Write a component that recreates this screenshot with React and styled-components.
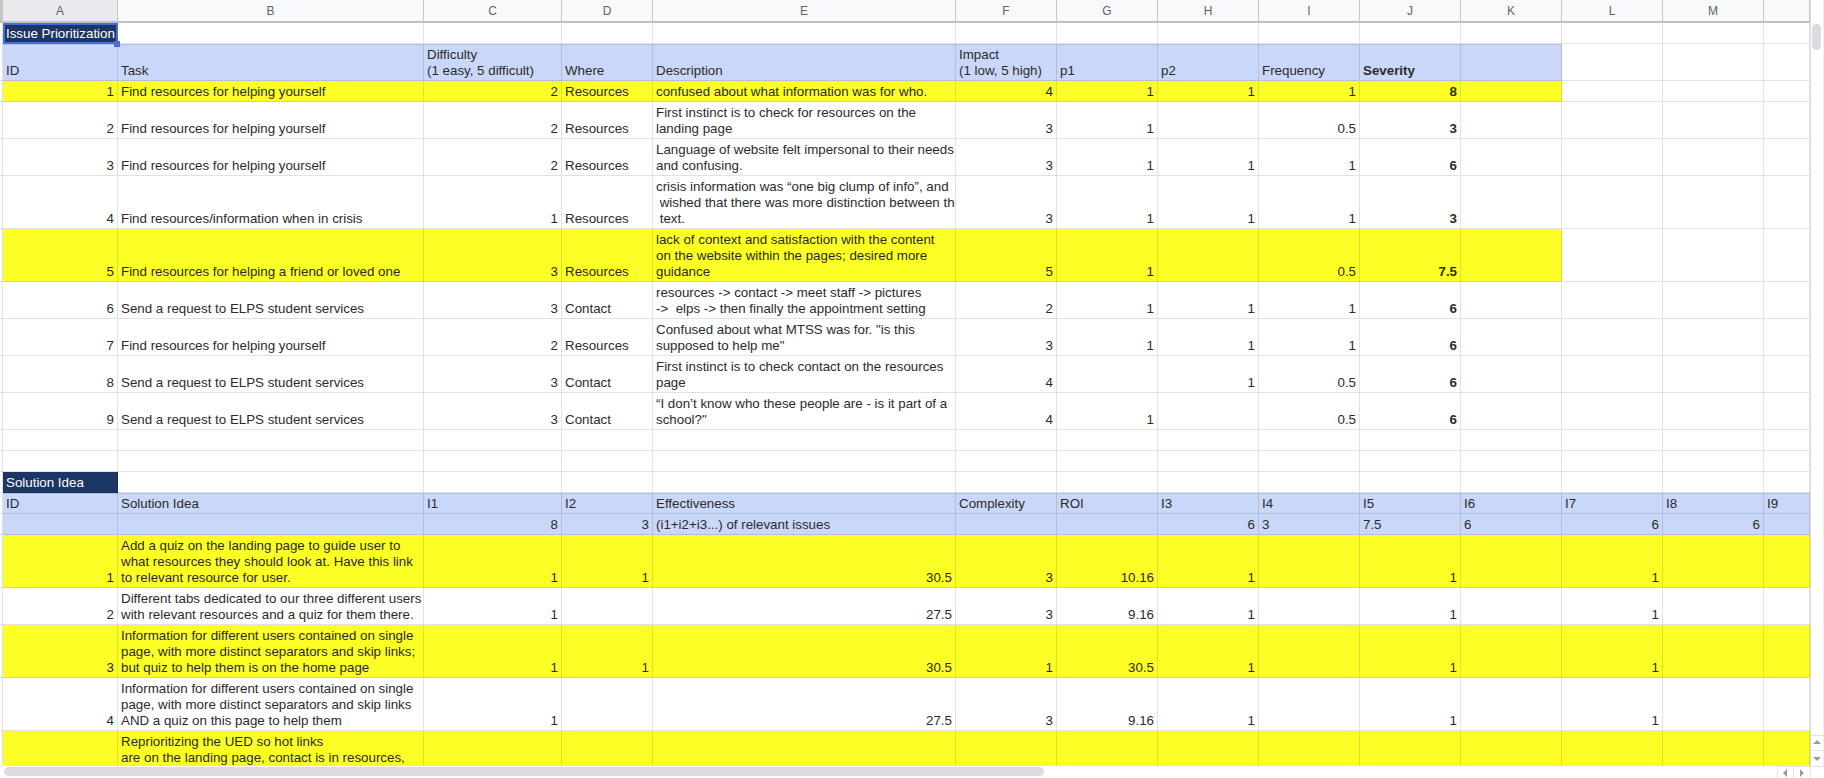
import React from 'react';
import styled, { createGlobalStyle, css } from 'styled-components';

const Global = createGlobalStyle`
  html, body { margin: 0; padding: 0; background: #fff; overflow: hidden; }
  #root { width: 1824px; height: 778px; }
`;

const COLS = '3px 115px 306px 138px 91px 303px 101px 101px 101px 101px 101px 101px 101px 101px 46px';

const Page = styled.div`
  display: flex;
  flex-direction: column;
  width: 1824px;
  height: 778px;
  overflow: hidden;
  font-family: "Liberation Sans", Arial, sans-serif;
  font-size: 13.33px;
  line-height: 16px;
  color: #2b2b2b;
`;
const Main = styled.div`
  display: flex;
  height: 766px;
`;
const Grid = styled.div`
  width: 1810px;
  height: 766px;
  overflow: hidden;
`;
const LetterBar = styled.div`
  display: grid;
  grid-template-columns: ${COLS};
  height: 23px;
  background: #f8f9fa;
`;
const Letter = styled.div`
  display: flex;
  align-items: center;
  justify-content: center;
  box-sizing: border-box;
  font-size: 12px;
  color: #5f6368;
  border-right: 1px solid #c7c7c7;
  border-bottom: 2px solid #c0c0c0;
  background: ${p => (p.$active ? '#e8eaed' : '#f8f9fa')};
`;
const Corner = styled.div`
  background: #c4c7c5;
  border-bottom: 2px solid #c0c0c0;
`;
const Row = styled.div`
  display: grid;
  grid-template-columns: ${COLS};
  height: ${p => p.$h}px;
`;
const Gutter = styled.div`
  border-bottom: 1px solid #e1e1e1;
  border-right: 1px solid #e1e1e1;
  box-sizing: border-box;
`;
const tones = {
  blue: css`
    background: #c9d7f8;
    box-shadow: inset 0 1px 0 rgba(40, 60, 110, 0.14);
  `,
  blueFlat: css`
    background: #c9d7f8;
  `,
  yellow: css`
    background: #fbff26;
  `,
  navy: css`
    background: #1c3663;
    color: #fff;
  `,
};
const Cell = styled.div`
  position: relative;
  display: flex;
  flex-direction: column;
  justify-content: flex-end;
  box-sizing: border-box;
  min-width: 0;
  padding: 0 3px 1px;
  overflow: hidden;
  white-space: pre;
  border-right: 1px solid rgba(0, 0, 0, 0.115);
  border-bottom: 1px solid rgba(0, 0, 0, 0.115);
  text-align: ${p => (p.$right ? 'right' : 'left')};
  font-weight: ${p => (p.$bold ? 700 : 400)};
  ${p => p.$tone && tones[p.$tone]}
`;
const SelectedCell = styled(Cell)`
  overflow: visible;
  outline: 2px solid #4a6bdc;
  outline-offset: -2px;
  z-index: 2;
  padding-left: 3px;
  padding-right: 0;
`;
const Handle = styled.span`
  position: absolute;
  right: -3px;
  bottom: -4px;
  width: 6px;
  height: 6px;
  background: #4a6bdc;
  border: 0;
`;
const VBar = styled.div`
  display: flex;
  flex-direction: column;
  width: 14px;
  height: 766px;
  box-sizing: border-box;
  border-left: 1px solid #dcdcdc;
  border-right: 1px solid #eeeeee;
`;
const VThumb = styled.div`
  width: 9px;
  height: 26px;
  margin: 24px 0 0 1px;
  border-radius: 5px;
  background: #dadce0;
`;
const VArrows = styled.div`
  margin-top: auto;
  display: flex;
  flex-direction: column;
`;
const ArrowBox = styled.div`
  display: flex;
  align-items: center;
  justify-content: center;
  box-sizing: border-box;
  width: ${p => p.$w}px;
  height: ${p => p.$h}px;
  border-top: 1px solid #e3e3e3;
  border-left: ${p => (p.$side ? '1px solid #e3e3e3' : '0')};
`;
const HBar = styled.div`
  display: flex;
  height: 12px;
  background: #fff;
`;
const HThumb = styled.div`
  width: 1040px;
  height: 9px;
  margin: 1px 0 0 4px;
  border-radius: 5px;
  background: #dadce0;
`;
const HArrows = styled.div`
  margin-left: auto;
  display: flex;
`;

const Tri = ({ dir }) => {
  const points = {
    up: '1,6 5,2 9,6',
    down: '1,3 5,7 9,3',
    left: '6,1 2,5 6,9',
    right: '3,1 7,5 3,9',
  }[dir];
  return (
    <svg width="10" height="10" viewBox="0 0 10 10">
      <polygon points={points} fill="#9a9a9a" />
    </svg>
  );
};

const LETTERS = ['A', 'B', 'C', 'D', 'E', 'F', 'G', 'H', 'I', 'J', 'K', 'L', 'M', ''];
const HELP = 'Find resources for helping yourself';
const ELPS = 'Send a request to ELPS student services';

const issues = [
  { h: 37, tone: 'blue', cells: ['ID', 'Task', 'Difficulty\n(1 easy, 5 difficult)', 'Where', 'Description', 'Impact\n(1 low, 5 high)', 'p1', 'p2', 'Frequency', 'Severity', ''] },
  { h: 21, tone: 'yellow', cells: [1, HELP, 2, 'Resources', 'confused about what information was for who.', 4, 1, 1, 1, 8, ''] },
  { h: 37, cells: [2, HELP, 2, 'Resources', 'First instinct is to check for resources on the\nlanding page', 3, 1, '', 0.5, 3, ''] },
  { h: 37, cells: [3, HELP, 2, 'Resources', 'Language of website felt impersonal to their needs\nand confusing.', 3, 1, 1, 1, 6, ''] },
  { h: 53, cells: [4, 'Find resources/information when in crisis', 1, 'Resources', 'crisis information was “one big clump of info”, and\n wished that there was more distinction between the\n text.', 3, 1, 1, 1, 3, ''] },
  { h: 53, tone: 'yellow', cells: [5, 'Find resources for helping a friend or loved one', 3, 'Resources', 'lack of context and satisfaction with the content\non the website within the pages; desired more\nguidance', 5, 1, '', 0.5, 7.5, ''] },
  { h: 37, cells: [6, ELPS, 3, 'Contact', 'resources -> contact -> meet staff -> pictures\n->  elps -> then finally the appointment setting', 2, 1, 1, 1, 6, ''] },
  { h: 37, cells: [7, HELP, 2, 'Resources', 'Confused about what MTSS was for. "is this\nsupposed to help me"', 3, 1, 1, 1, 6, ''] },
  { h: 37, cells: [8, ELPS, 3, 'Contact', 'First instinct is to check contact on the resources\npage', 4, '', 1, 0.5, 6, ''] },
  { h: 37, cells: [9, ELPS, 3, 'Contact', '“I don’t know who these people are - is it part of a\nschool?"', 4, 1, '', 0.5, 6, ''] },
];

const solutions = [
  { h: 21, tone: 'blue', cells: ['ID', 'Solution Idea', 'I1', 'I2', 'Effectiveness', 'Complexity', 'ROI', 'I3', 'I4', 'I5', 'I6', 'I7', 'I8', 'I9'] },
  { h: 21, tone: 'blueFlat', cells: ['', '', 8, 3, '(i1+i2+i3...) of relevant issues', '', '', 6, '3', '7.5', '6', 6, 6, ''] },
  { h: 53, tone: 'yellow', cells: [1, 'Add a quiz on the landing page to guide user to\nwhat resources they should look at. Have this link\nto relevant resource for user.', 1, 1, 30.5, 3, 10.16, 1, '', 1, '', 1, '', ''] },
  { h: 37, cells: [2, 'Different tabs dedicated to our three different users\nwith relevant resources and a quiz for them there.', 1, '', 27.5, 3, 9.16, 1, '', 1, '', 1, '', ''] },
  { h: 53, tone: 'yellow', cells: [3, 'Information for different users contained on single\npage, with more distinct separators and skip links;\nbut quiz to help them is on the home page', 1, 1, 30.5, 1, 30.5, 1, '', 1, '', 1, '', ''] },
  { h: 53, cells: [4, 'Information for different users contained on single\npage, with more distinct separators and skip links\nAND a quiz on this page to help them', 1, '', 27.5, 3, 9.16, 1, '', 1, '', 1, '', ''] },
  { h: 69, tone: 'yellow', top: true, cells: ['', 'Reprioritizing the UED so hot links\nare on the landing page, contact is in resources,', '', '', '', '', '', '', '', '', '', '', '', ''] },
];

const TopCell = styled(Cell)`
  justify-content: flex-start;
  padding-top: 3px;
`;

const DataRow = ({ row, boldCol }) => {
  const Kind = row.top ? TopCell : Cell;
  const padded = [...row.cells, ...Array(14 - row.cells.length).fill(null)];
  return (
    <Row $h={row.h}>
      <Gutter />
      {padded.map((c, i) => (
        <Kind
          key={i}
          $right={typeof c === 'number'}
          $bold={i === boldCol}
          $tone={c === null ? undefined : row.tone}
        >
          {c}
        </Kind>
      ))}
    </Row>
  );
};

const BlankRow = () => (
  <Row $h={21}>
    <Gutter />
    {LETTERS.map((l, i) => <Cell key={i} />)}
  </Row>
);

export default function App() {
  return (
    <Page>
      <Global />
      <Main>
        <Grid>
          <LetterBar>
            <Corner />
            {LETTERS.map((l, i) => <Letter key={i} $active={i === 0}>{l}</Letter>)}
          </LetterBar>
          <Row $h={21}>
            <Gutter />
            <SelectedCell $tone="navy">Issue Prioritization<Handle /></SelectedCell>
            {LETTERS.slice(1).map((l, i) => <Cell key={i} />)}
          </Row>
          {issues.map((r, i) => <DataRow key={i} row={r} boldCol={9} />)}
          <BlankRow />
          <BlankRow />
          <Row $h={21}>
            <Gutter />
            <Cell $tone="navy">Solution Idea</Cell>
            {LETTERS.slice(1).map((l, i) => <Cell key={i} />)}
          </Row>
          {solutions.map((r, i) => <DataRow key={i} row={r} />)}
        </Grid>
        <VBar>
          <VThumb />
          <VArrows>
            <ArrowBox $w={12} $h={15}><Tri dir="up" /></ArrowBox>
            <ArrowBox $w={12} $h={16}><Tri dir="down" /></ArrowBox>
          </VArrows>
        </VBar>
      </Main>
      <HBar>
        <HThumb />
        <HArrows>
          <ArrowBox $w={16} $h={12} $side><Tri dir="left" /></ArrowBox>
          <ArrowBox $w={17} $h={12} $side><Tri dir="right" /></ArrowBox>
          <ArrowBox $w={14} $h={12} $side />
        </HArrows>
      </HBar>
    </Page>
  );
}
